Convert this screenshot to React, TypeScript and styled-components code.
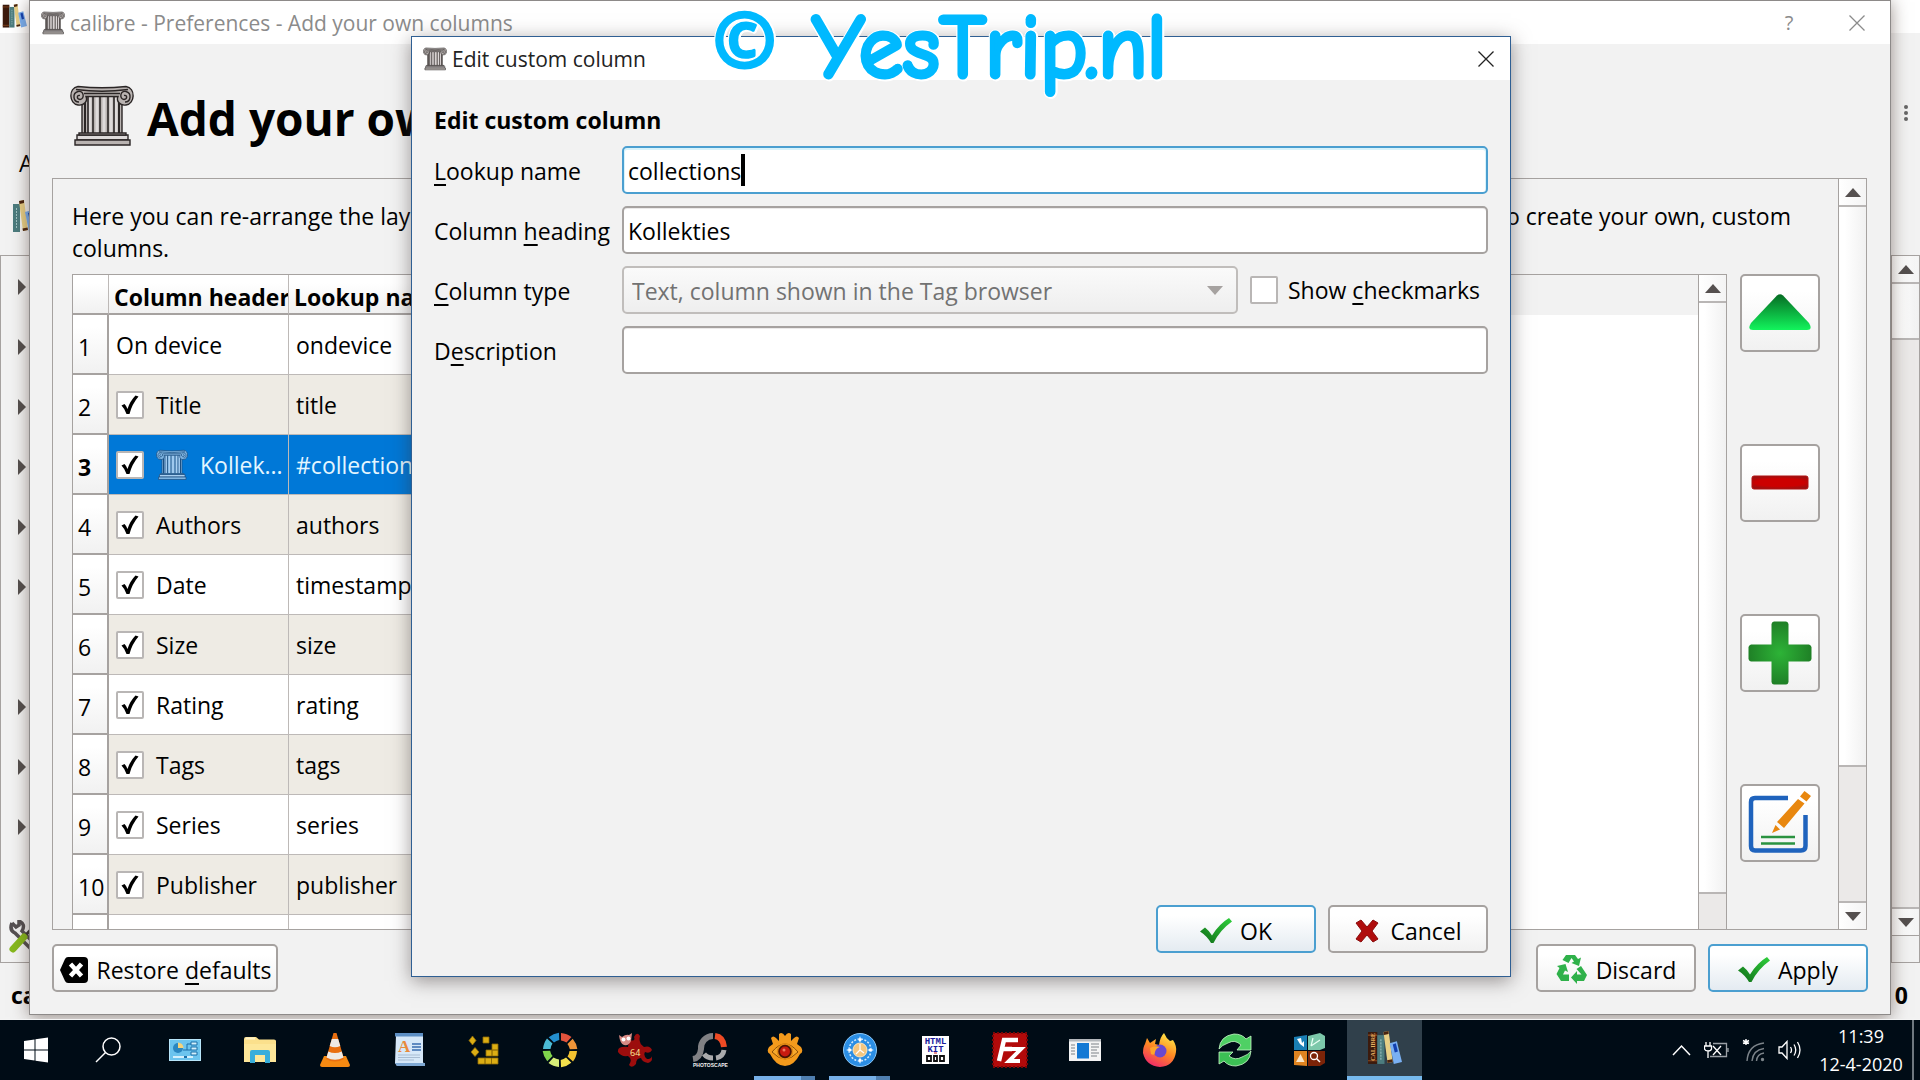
import React from "react";
import styled, { createGlobalStyle, css } from "styled-components";

const line = "#a6a2a0";
const panel = "#f2f2f2";

const Global = createGlobalStyle`
  *, *::before, *::after { box-sizing: border-box; }
  html, body { margin: 0; height: 100%; overflow: hidden; }
  body, button, input, select, table {
    font-family: "Open Sans", "Noto Sans", sans-serif;
    font-size: 23px;
    line-height: 32px;
    color: #000;
  }
  u { text-underline-offset: 4px; text-decoration-thickness: 2px; text-decoration-skip-ink: none; }
`;

/* ---------- Desktop and windows ---------- */

const Screen = styled.div`
  display: flex;
  flex-direction: column;
  height: 100vh;
  overflow: hidden;
`;

const Desktop = styled.div`
  position: relative;
  flex: 1;
  min-height: 0;
  overflow: hidden;
`;

const LibraryWindow = styled.div`
  display: flex;
  flex-direction: column;
  height: 100%;
  background: ${panel};
`;

const LibraryTitle = styled.div`
  height: 33px;
  padding: 4px 2px;
  background: #fff;
`;

const LibraryBar = styled.div<{ $height: number; $align?: string; $start?: number }>`
  display: flex;
  justify-content: space-between;
  align-items: ${(p) => p.$align ?? "flex-end"};
  height: ${(p) => p.$height}px;
  padding: 0 8px 0 ${(p) => p.$start ?? 19}px;
`;

const LibraryBody = styled.div`
  display: flex;
  justify-content: space-between;
  flex: 1;
  min-height: 0;
  border: 1px solid ${line};
`;

const Tree = styled.div`
  display: flex;
  flex-direction: column;
  padding: 1px 0 0 6px;
`;

const TreeNode = styled.div`
  display: flex;
  align-items: center;
  justify-content: center;
  width: 30px;
  height: 60px;
`;

const TreeTools = styled.div`
  display: flex;
  align-items: center;
  height: 50px;
  margin-top: auto;
`;

const LibraryStatus = styled.div`
  display: flex;
  justify-content: space-between;
  align-items: center;
  height: 56px;
  padding: 8px 12px 0 11px;
  font-weight: 700;
`;

const PreferencesWindow = styled.section`
  position: absolute;
  inset: 0 29px 4px 29px;
  display: flex;
  flex-direction: column;
  background: ${panel};
  border: 1px solid #8d8a89;
  box-shadow: 0 2px 16px rgba(60, 40, 30, 0.5);
`;

const DialogWindow = styled.section`
  position: absolute;
  inset: 36px 409px 42px 411px;
  display: flex;
  flex-direction: column;
  background: ${panel};
  border: 1px solid #2f5f93;
  box-shadow: 0 4px 18px rgba(60, 50, 50, 0.5);
`;

const TitleBar = styled.header<{ $inactive?: boolean }>`
  display: flex;
  align-items: center;
  gap: 5px;
  height: 43px;
  padding: 0 ${(p) => (p.$inactive ? 17 : 8)}px 0 11px;
  background: #fff;
  color: ${(p) => (p.$inactive ? "#8b8b8b" : "#222")};
  font-size: 21px;
`;

const TitleText = styled.span`
  flex: 1;
  white-space: nowrap;
`;

const WindowButton = styled.button`
  display: grid;
  place-items: center;
  width: 32px;
  height: 32px;
  padding: 0;
  border: 0;
  background: none;
  color: inherit;
  font-size: 20px;
`;

const WindowButtons = styled.div`
  display: flex;
  gap: 36px;
`;

const PageHeader = styled.div`
  display: flex;
  align-items: center;
  gap: 13px;
  height: 134px;
  padding: 10px 40px 0;
`;

const PageTitle = styled.h1`
  margin: 4px 0 0;
  font-size: 46px;
  line-height: 64px;
  white-space: nowrap;
`;

const Frame = styled.div`
  display: flex;
  flex: 1;
  min-height: 0;
  margin: 0 23px 0 22px;
  border: 1px solid ${line};
  overflow: hidden;
`;

const FrameContent = styled.div`
  display: flex;
  flex-direction: column;
  flex: 1;
  min-width: 0;
  padding: 21px 18px 0 19px;
`;

const Intro = styled.p`
  margin: 0 29px 10px 0;
`;

const IntroLine = styled.span`
  display: flex;
  justify-content: space-between;
  white-space: nowrap;
`;

const Columns = styled.div`
  display: flex;
  gap: 13px;
  flex: 1;
  min-height: 0;
`;

const TableBox = styled.div`
  display: flex;
  flex: 1;
  min-width: 0;
  border: 1px solid ${line};
  border-bottom: 0;
  background: #fff;
  overflow: hidden;
`;

const TableScroll = styled.div`
  flex: 1;
  overflow: hidden;
`;

const SideButtons = styled.div`
  display: flex;
  flex-direction: column;
  gap: 92px;
`;

const Footer = styled.footer`
  display: flex;
  gap: 12px;
  padding: 14px 22px 22px;
`;

const Spacer = styled.div`
  flex: 1;
`;

/* ---------- Column table ---------- */

const Table = styled.table`
  width: 100%;
  border-collapse: separate;
  border-spacing: 0;
  table-layout: fixed;
`;

const headFill = css`
  background: linear-gradient(#fff 20%, #f1f1f1);
`;

const HeadCell = styled.th`
  height: 40px;
  padding: 6px 0 0 5px;
  ${headFill}
  border-right: 1px solid #bdb9b7;
  border-bottom: 2px solid ${line};
  font-weight: 700;
  text-align: left;
  white-space: nowrap;
  overflow: hidden;
`;

const HeadFiller = styled.td`
  background: ${panel};
`;

const RowHead = styled.th<{ $current?: boolean }>`
  height: 60px;
  padding: 6px 0 0 5px;
  ${headFill}
  border-right: 2px solid ${line};
  border-bottom: 2px solid ${line};
  font-weight: ${(p) => (p.$current ? 700 : 400)};
  text-align: left;
`;

const Cell = styled.td<{ $tone: "plain" | "alt" | "selected" }>`
  height: 60px;
  padding: 0 0 0 7px;
  border-right: 1px solid #bdb9b7;
  border-bottom: 1px solid #bdb9b7;
  background: ${(p) => ({ plain: "#fff", alt: "#eeebe4", selected: "#0078d7" })[p.$tone]};
  color: ${(p) => (p.$tone === "selected" ? "#e4f6ff" : "#000")};
  white-space: nowrap;
  overflow: hidden;
`;

const CellContent = styled.label`
  display: flex;
  align-items: center;
  gap: 12px;
`;

/* ---------- Controls ---------- */

const PushButton = styled.button<{ $primary?: boolean; $wide?: boolean }>`
  display: flex;
  align-items: center;
  justify-content: center;
  gap: 8px;
  min-width: ${(p) => (p.$wide ? 226 : 160)}px;
  height: 48px;
  padding: 3px 4px 0;
  border: 2px solid ${(p) => (p.$primary ? "#4b9fd0" : line)};
  border-radius: 5px;
  background: ${(p) => (p.$primary ? "linear-gradient(#fff 20%, #e4ebf1)" : "linear-gradient(#fff 20%, #f1f1f1)")};
  white-space: nowrap;
`;

const ToolButton = styled.button`
  display: grid;
  place-items: center;
  width: 80px;
  height: 78px;
  padding: 0;
  border: 2px solid ${line};
  border-radius: 5px;
  background: linear-gradient(#fff 20%, #f1f1f1);
`;

const TickSlot = styled.span`
  display: inline-grid;
  flex: none;
  place-items: center;
  width: 28px;
  height: 28px;
  & > * { grid-area: 1 / 1; }
  & > svg { pointer-events: none; }
`;

const TickInput = styled.input`
  appearance: none;
  width: 28px;
  height: 28px;
  margin: 0;
  border: 2px solid #b9b6b5;
  border-radius: 2px;
  background: #fff;
`;

const DialogBody = styled.div`
  display: flex;
  flex-direction: column;
  flex: 1;
  padding: 24px 22px 23px;
`;

const DialogHeading = styled.h2`
  margin: 0 0 10px;
  font-size: 23px;
  line-height: 32px;
`;

const Form = styled.div`
  display: grid;
  grid-template-columns: 188px 1fr;
  row-gap: 12px;
`;

const FieldLabel = styled.label`
  padding-top: 9px;
  white-space: nowrap;
`;

const FieldBox = styled.div<{ $focus?: boolean }>`
  display: flex;
  align-items: center;
  height: 48px;
  padding: 0 4px;
  border: 2px solid ${(p) => (p.$focus ? "#4b9fd0" : line)};
  border-radius: 5px;
  background: #fff;
  box-shadow: ${(p) => (p.$focus ? "inset 0 1px 0 1px #d9f3fb" : "inset 0 1px 0 #eceaea")};
`;

const Field = styled.input<{ $fit?: boolean }>`
  ${(p) => (p.$fit ? "field-sizing: content;" : "width: 100%;")}
  height: 40px;
  padding: 2px 0 0;
  border: 0;
  outline: 0;
  background: transparent;
`;

const Caret = styled.span`
  width: 4px;
  height: 32px;
  background: #000;
`;

const TypeRow = styled.div`
  display: flex;
  align-items: center;
  gap: 12px;
`;

const SelectBox = styled.div`
  display: grid;
  flex: 1;
  align-items: center;
  & > * { grid-area: 1 / 1; }
  & > svg { justify-self: end; margin-right: 15px; pointer-events: none; }
`;

const Select = styled.select`
  appearance: none;
  width: 100%;
  height: 48px;
  padding: 2px 8px 0;
  border: 2px solid #c0bdbb;
  border-radius: 5px;
  background: linear-gradient(#fafafa, #eeeeee);
  color: #727272;
  opacity: 1;
`;

const CheckLabel = styled.label`
  display: flex;
  align-items: center;
  gap: 10px;
  width: 238px;
  white-space: nowrap;
`;

const DialogActions = styled.div`
  display: flex;
  justify-content: flex-end;
  gap: 12px;
  margin-top: auto;
`;

/* ---------- Scroll bars ---------- */

const Bar = styled.div`
  display: flex;
  flex-direction: column;
  flex: none;
  width: 28px;
  border-left: 1px solid ${line};
  background: #ebe9e8;
`;

const BarArrow = styled.div<{ $down?: boolean }>`
  display: grid;
  place-items: center;
  height: 28px;
  background: linear-gradient(90deg, #fff, #f4f4f4);
  border: 0 solid #b9b6b5;
  border-width: ${(p) => (p.$down ? "2px 0 0" : "0 0 2px")};
`;

const Thumb = styled.div<{ $grow: number }>`
  flex: ${(p) => p.$grow};
  background: linear-gradient(90deg, #fff 20%, #f1f1f1);
  border-bottom: 2px solid #b9b6b5;
`;

const Track = styled.div<{ $grow: number }>`
  flex: ${(p) => p.$grow};
`;

const BarCorner = styled.div`
  height: 27px;
  border-top: 1px solid ${line};
  background: ${panel};
`;

const Triangle = ({ dir, color = "#55504f" }: { dir: "up" | "down" | "right"; color?: string }) => {
  const d = { up: "M0 9 8 0 16 9z", down: "M0 0H16L8 9z", right: "M0 0 8 8 0 16z" }[dir];
  const [w, h] = dir === "right" ? [8, 16] : [16, 9];
  return (
    <svg width={w} height={h} viewBox={`0 0 ${w} ${h}`}>
      <path d={d} fill={color} />
    </svg>
  );
};

type BarProps = { thumb: number; track: number; down?: boolean; corner?: boolean };
const ScrollBar = ({ thumb, track, down, corner }: BarProps) => (
  <Bar>
    <BarArrow><Triangle dir="up" /></BarArrow>
    <Thumb $grow={thumb} />
    <Track $grow={track} />
    {down && <BarArrow $down><Triangle dir="down" /></BarArrow>}
    {corner && <BarCorner />}
  </Bar>
);

/* ---------- Icons ---------- */

const ColumnIcon = ({ w, tint }: { w: number; tint?: boolean }) => {
  const ink = tint ? "#1d4f80" : "#2b2626";
  const stone = tint ? "#7fb4e0" : "#b9b3b1";
  const light = tint ? "#a9d0f2" : "#dedada";
  return (
    <svg width={w} height={w} viewBox="0 0 64 64" fill="none" stroke={ink} strokeWidth="1.4">
      <path d="M12 12H52V50H12z" fill={stone} />
      <path d="M15 14V50M49 14V50" strokeWidth="2" />
      <path d="M20 13V49M27 13V49M34 13V49M41 13V49M46 14V49" stroke={light} strokeWidth="3" />
      <path d="M18 13V49M23 13V49M30 13V49M38 13V49M44 13V49" strokeWidth="1.6" />
      <path d="M8 2.500Q32 5 56 2.500C66 4 65 20 56 21C50 22 46 17 48 12.500H16C18 17 14 22 8 21C-1 20-2 4 8 2.500z" fill={stone} />
      <path d="M6 5.500Q32 9 58 5.500M14 9.500H50" />
      <path d="M9 18C3 18 2 9 8 7.500C14 6.500 15 15 10 15.500C6 15 7 10.500 10 11.500M55 18C61 18 62 9 56 7.500C50 6.500 49 15 54 15.500C58 15 57 10.500 54 11.500" />
      <path d="M7 51H58V56H7z" fill={light} />
      <path d="M5 56H60V61H5z" fill={stone} />
      <path d="M9 49H56V51H9z" fill={stone} />
    </svg>
  );
};

const Cross = () => (
  <svg width="16" height="16" viewBox="0 0 16 16" stroke="currentColor" strokeWidth="1.3">
    <path d="M.5.5 15.500 15.500M15.500.5.5 15.500" />
  </svg>
);

const GreenTick = () => (
  <svg width="32" height="26" viewBox="0 0 32 26">
    <defs>
      <linearGradient id="tick" x1="0" y1="1" x2="1" y2="0">
        <stop offset="0.200" stopColor="#16801f" />
        <stop offset="1" stopColor="#2fd03c" />
      </linearGradient>
    </defs>
    <path d="M0 13.500 5 9.500Q9 12.500 12 17.500Q19 6 29 0L32 3.500Q20 12 13.500 25H11Q7 18 0 13.500z" fill="url(#tick)" />
  </svg>
);

const RedCross = () => (
  <svg width="28" height="24" viewBox="-1 0 28 24">
    <path d="M1 4 6 1 12 8 18 1 23 4 17 12 23 20 18 23 12 16 6 23 1 20 7 12z" fill="#b00d0d" stroke="#8a0c0c" strokeLinejoin="round" />
  </svg>
);

const Recycle = () => (
  <svg width="32" height="32" viewBox="0 0 32 32" fill="#2fb14a">
    <path d="M10 1H19L22 5 25 3.500 23 12 15.500 9 18 7.500 15.500 4 12.500 9 6.500 6z" />
    <path d="M25 12 31 21 28 27H21V30L15 23.500 21 17V20.500H25.500L20.500 15z" />
    <path d="M1 12 9.500 10 12 18 9 16.500 7 20.500H13V27H5L.5 20 3.500 14z" />
  </svg>
);

const ClearIcon = () => (
  <svg width="30" height="28" viewBox="0 0 30 28">
    <path d="M9 1H25Q29 1 29 5V23Q29 27 25 27H9Q7 27 6 25L1 14 6 3Q7 1 9 1z" fill="#000" />
    <path d="M11.500 8 22.500 20M22.500 8 11.500 20" stroke="#fff" strokeWidth="4.500" />
  </svg>
);

const BlackTick = () => (
  <svg width="20" height="20" viewBox="0 0 20 20">
    <path d="M1.500 10.500 4.500 9Q6.500 11 7.500 14Q10 6 15.500.5L18.500 1.500Q12 9 9.500 19H6.500Q5 14 1.500 10.500z" fill="#000" />
  </svg>
);

const Tick = (props: React.InputHTMLAttributes<HTMLInputElement>) => (
  <TickSlot>
    <TickInput type="checkbox" {...props} />
    {props.defaultChecked && <BlackTick />}
  </TickSlot>
);

const MoveUp = () => (
  <svg width="64" height="64" viewBox="0 0 64 64">
    <defs>
      <linearGradient id="up" x1="0" y1="0" x2="0" y2="1">
        <stop stopColor="#066b23" />
        <stop offset="1" stopColor="#12f45c" />
      </linearGradient>
    </defs>
    <path d="M29 14.500Q32 12 35 14.500L61 42Q65 49 59 49H5Q-1 49 3 42z" fill="url(#up)" />
  </svg>
);

const Minus = () => (
  <svg width="64" height="64" viewBox="0 0 64 64">
    <defs>
      <radialGradient id="minus" gradientTransform="translate(-.2 0) scale(1.4 1)">
        <stop offset="0.600" stopColor="#cc0000" />
        <stop offset="1" stopColor="#9c1010" />
      </radialGradient>
    </defs>
    <rect x="4" y="25" width="56" height="13" rx="2" fill="url(#minus)" stroke="#b01010" />
  </svg>
);

const Plus = () => (
  <svg width="64" height="64" viewBox="0 0 64 64">
    <defs>
      <radialGradient id="plus">
        <stop stopColor="#2db337" />
        <stop offset="1" stopColor="#1f8026" />
      </radialGradient>
    </defs>
    <path d="M26 .5H38Q40 .5 40.500 3V23.500H61Q63 24 63.500 26V38Q63 40 61 40.500H40.500V61Q40 63.500 38 63.500H26Q24 63.500 23.500 61V40.500H3Q1 40 .5 38V26Q1 24 3 23.500H23.500V3Q24 .5 26 .5z" fill="url(#plus)" />
  </svg>
);

const EditIcon = () => (
  <svg width="64" height="64" viewBox="0 0 64 64" fill="none">
    <path d="M40 7H7Q3 7 3 11V55Q3 59.500 7 59.500H53Q57.500 59.500 57.500 55V24" stroke="#1f63bd" strokeWidth="4.500" />
    <path d="M13 46H47M13 52.500H47" stroke="#2a9240" strokeWidth="2.500" />
    <path d="M50 8 56.500 12.500 36 37 29 31z M52 5.500 56.500 0 63 5 58.500 10.500z M27.500 34 32 38.500 24 42z" fill="#e8870f" />
  </svg>
);

const Books = ({ w, text, part }: { w: number; text?: boolean; part?: boolean }) => (
  <svg width={w} height={w} viewBox="0 0 34 34">
    {!part && <rect x="1" y="1" width="9" height="31" fill="#3c1a0c" />}
    {!part && <path d="M1 4H10M1 29H10" stroke="#8c4a20" />}
    <rect x="10" y="4" width="7" height="28" fill="#4c7c7e" />
    <path d="M13.500 8V28" stroke="#9fc2c2" strokeDasharray="2 1" />
    <path d="M16 1 21 0 25 30 20 31z" fill="#e8cf86" />
    <path d="M16 1 21 0V3L16.500 4zM19.500 28.500 24.500 27.500 25 30 20 31z" fill="#4a2410" />
    <path d="M22 12 29 10 34 30 26 32z" fill="#7ab0f2" />
    <path d="M25 13 28 12 30 20 27 21z" fill="#1240b0" />
    {text && (
      <text transform="translate(8 29) rotate(-90)" fontSize="6" fontWeight="700" fill="#e8b060" fontFamily="Liberation Serif">CALIBRE</text>
    )}
  </svg>
);

const Tools = () => (
  <svg width="34" height="34" viewBox="0 0 34 34" fill="none">
    <path d="M5 3Q2 10 8 13L26 31M5 3 9 7 12 5V1Q19 4 15 11L31 27" stroke="#555052" strokeWidth="3.500" />
    <path d="M30 3 17 17" stroke="#3a3638" strokeWidth="3" />
    <path d="M17 17 6 29" stroke="#86b81c" strokeWidth="7" strokeLinecap="round" />
  </svg>
);

/* ---------- Taskbar ---------- */

const TaskBar = styled.nav`
  display: flex;
  height: 61px;
  border-top: 1px solid #f4f4f4;
  background: #000c16;
  color: #fff;
`;

const Task = styled.button<{ $state?: "running" | "active"; $system?: boolean }>`
  position: relative;
  display: grid;
  flex: none;
  place-items: center;
  width: ${(p) => (p.$system ? 72 : 75)}px;
  padding: 0;
  border: 0;
  border-bottom: ${(p) => (p.$state === "active" ? "4px solid #76b9ed" : "0")};
  background: ${(p) => (p.$state === "active" ? "#30404b" : "none")};
  ${(p) =>
    p.$state === "running" &&
    css`
      &::after {
        content: "";
        position: absolute;
        inset: auto 7px 0;
        height: 4px;
        background: linear-gradient(90deg, #76b0e8 77%, #4f7fb0 77%);
      }
    `}
`;

const TaskList = styled.div`
  display: flex;
  flex: 1;
  margin-left: 3px;
`;

const Tray = styled.div`
  display: flex;
  align-items: center;
  gap: 13px;
`;

const Clock = styled.time`
  width: 92px;
  font-size: 18px;
  line-height: 28px;
  text-align: center;
`;

const ShowDesktop = styled.button`
  width: 8px;
  height: 100%;
  margin-left: -8px;
  padding: 0;
  border: 0;
  border-left: 2px solid #6e7880;
  background: none;
`;

const Glyph = ({ children, size = 36 }: { children: React.ReactNode; size?: number }) => (
  <svg width={size} height={size} viewBox="0 0 36 36" fill="none">{children}</svg>
);

const ringColours = ["#e2533c", "#ee9438", "#f2c230", "#f3e04c", "#d7ee78", "#7fd44c", "#4cbcd6", "#2490cf"];
const RingGlyph = () => (
  <Glyph>
    {ringColours.map((c, i) => (
      <path key={c} transform={`rotate(${i * 45} 18 18)`} d="M19 1Q25 1.500 29.500 5L24.500 10.500Q22 8.800 19 8.500z" fill={c} />
    ))}
  </Glyph>
);

const tasks: { name: string; state?: "running" | "active"; icon: React.ReactNode }[] = [
  {
    name: "Control panel",
    icon: (
      <Glyph>
        <rect x="2.500" y="7.500" width="31" height="21" fill="#6cc4ee" stroke="#b8e6fa" />
        <circle cx="11" cy="16" r="5" fill="#2a86c0" /><path d="M11 16V10.500A5.500 5.500 0 0 1 16.500 16z" fill="#f3d27a" />
        <path d="M16 18H20V12H24M20 18H24" stroke="#1b6fa8" />
        <path d="M24 10H30V13H24zM24 15H30V18H24zM24 20H30V23H24z" fill="#d4f0fc" stroke="#1b6fa8" />
        <path d="M6 25H26" stroke="#d4f0fc" strokeWidth="2" /><path d="M17 25H20" stroke="#1b6fa8" strokeWidth="2" />
      </Glyph>
    ),
  },
  {
    name: "File Explorer",
    icon: (
      <Glyph>
        <path d="M2 30V7Q2 5 4 5H14L17 7.500H32Q34 7.500 34 9V30z" fill="#fbe08c" />
        <path d="M3.500 6.500H13" stroke="#fff3c8" strokeWidth="2" />
        <path d="M2 30V12H34V30z" fill="#fde79a" />
        <path d="M8 31V20Q8 18 10 18H26Q28 18 28 20V31H23V23H13V31z" fill="#38aedb" />
      </Glyph>
    ),
  },
  {
    name: "VLC media player",
    icon: (
      <Glyph>
        <path d="M7 24H29L33 33Q33 35 31 35H5Q3 35 3 33z" fill="#f58a12" />
        <path d="M16.500 1H19.500L27 27Q18 32 9 27z" fill="#e96f10" />
        <path d="M14.800 7H21.200L23.300 14Q18 16.500 12.700 14zM11.300 19.500Q18 22.500 24.700 19.500L26.500 25.500Q18 30 9.500 25.500z" fill="#eeeae6" />
      </Glyph>
    ),
  },
  {
    name: "WordPad",
    icon: (
      <Glyph>
        <path d="M4 3H31V30L33 34H5L3 31z" fill="#d6e8f8" /><path d="M3 1H31V4.500H3z" fill="#5d8fc4" />
        <path d="M3 31H33V34H5z" fill="#7fa9d4" />
        <text x="6" y="20" fontSize="17" fontWeight="700" fill="#e88a3c" fontFamily="Liberation Serif">A</text>
        <path d="M20 12H29M20 15H29M20 18H29" stroke="#3a6cae" strokeWidth="1.500" />
        <path d="M6 23H28M6 25.500H28M6 28H22" stroke="#a8bcd2" />
      </Glyph>
    ),
  },
  {
    name: "Blocks",
    icon: (
      <Glyph>
        <g fill="#dcae14" stroke="#8f6c06" strokeWidth=".8">
          <path d="M5.500 4 9 8.500 5.500 13 2 8.500zM8 15.500 12 20 8 24.500 4 20zM16 5H22V11H16z" />
          <path d="M25 12H31V18H25zM19 18H25V24H19zM25 18H31V24H25zM11 26H18V32H11zM18 26H24.500V32H18zM24.500 26H31V32H24.500z" />
        </g>
      </Glyph>
    ),
  },
  { name: "Ring", icon: <RingGlyph /> },
  {
    name: "IrfanView 64",
    icon: (
      <Glyph>
        <path d="M12 8Q19 10 17 5Q20-1 23 4Q21 11 27 15Q33 13 35 18Q33 22 28 20Q26 24 30 27Q35 27 34 24Q37 29 31 31Q25 30 24 26Q19 26 19 32Q15 37 12 33Q16 27 11 24Q4 25 1 20Q0 14 11 15z" fill="#9c0d0d" />
        <path d="M2 3 5 5Q9 2 12 3L15 1 14 9Q12 14 7 13Q3 12 2 3z" fill="#d88a84" /><circle cx="6.500" cy="7.500" r="2" fill="#fff" /><circle cx="11.500" cy="6.500" r="2" fill="#fff" />
        <text x="13" y="24" fontSize="9" fill="#fff09a" fontFamily="Open Sans">64</text>
      </Glyph>
    ),
  },
  {
    name: "PhotoScape",
    icon: (
      <Glyph>
        <path d="M21 4A12 12 0 0 0 9 17Q8 26 1 27" stroke="#808184" strokeWidth="6" />
        <path d="M12 22Q15 26 21 26M24 26Q31 25 32 18" stroke="#a9aaac" strokeWidth="5" />
        <path d="M23 4Q31 5 32 15" stroke="#ee4a24" strokeWidth="6" />
        <text x="1" y="35" fontSize="5" fontWeight="700" fill="#f2f2f2" fontFamily="Liberation Sans">PHOTOSCAPE</text>
      </Glyph>
    ),
  },
  {
    name: "XnView",
    state: "running",
    icon: (
      <Glyph>
        <path d="M2 15Q-1 20 3 22Q9 34 18 34Q27 34 33 22Q37 20 34 15L30 12 32 6Q30 3 27 6L24 9 24 2Q21-1 18 4Q15-1 12 2L12 9 9 6Q6 3 4 6L6 12z" fill="#f39a1c" />
        <path d="M5 20Q18 4 31 20Q18 34 5 20z" fill="#f7a92c" stroke="#8d5008" strokeWidth="1" />
        <circle cx="18" cy="19.500" r="7.500" fill="#4a1206" stroke="#e28a14" strokeWidth="1.500" /><circle cx="18" cy="19.500" r="5" fill="#c81a10" /><circle cx="17" cy="18" r="1.500" fill="#f07a60" />
      </Glyph>
    ),
  },
  {
    name: "Compass",
    state: "running",
    icon: (
      <Glyph>
        <circle cx="18" cy="18" r="16.500" fill="#2b8ee4" stroke="#8cc8f6" /><circle cx="18" cy="18" r="11" stroke="#d8ecfc" strokeWidth="1.500" strokeDasharray="2 1.500" />
        <path d="M18 4 19.500 8.500 18 10 16.500 8.500zM18 32 19.500 27.500 18 26 16.500 27.500zM4 18 8.500 16.500 10 18 8.500 19.500zM32 18 27.500 16.500 26 18 27.500 19.500z" fill="#fff" />
        <circle cx="18" cy="18" r="7" fill="#f5c67e" stroke="#fbe6c0" /><path d="M18 12V18L14 22M18 18 22 21" stroke="#fff" strokeWidth="1.200" />
      </Glyph>
    ),
  },
  {
    name: "HTML-Kit",
    icon: (
      <Glyph>
        <rect x="5" y="4" width="27" height="28" fill="#fff" />
        <g fontFamily="Liberation Mono" fontWeight="700" textAnchor="middle">
          <text x="18.500" y="12" fontSize="9" fill="#1a1a9c">HTML</text>
          <text x="18.500" y="19.500" fontSize="9" fill="#1a1a9c">KIT</text>
        </g>
        <path d="M10 24H14V29H10zM17 24H20V29H17zM23 24H27V29H23z" stroke="#111" strokeWidth="1.800" /><path d="M17 21H20" stroke="#c22" />
      </Glyph>
    ),
  },
  {
    name: "FileZilla",
    icon: (
      <Glyph>
        <rect x="1" y="1" width="34" height="34" fill="#b20a0a" stroke="#7a0606" strokeWidth="2" strokeDasharray="2 2" />
        <path d="M7 29 12 8H26M10 17H20" stroke="#fff" strokeWidth="4.500" />
        <path d="M17 17H29L17 29H28" stroke="#fff" strokeWidth="4" />
      </Glyph>
    ),
  },
  {
    name: "Reader",
    icon: (
      <Glyph>
        <rect x="2" y="7" width="32" height="22" fill="#f4f4f4" /><path d="M2 7H34V9.500H2z" fill="#b4b8bc" />
        <rect x="10" y="11" width="12" height="15.500" fill="#1479d4" />
        <path d="M4 13H8M4 16H8M4 19H8M4 22H8M24 12H32M24 15H32M24 18H30M24 21H32M24 24H30" stroke="#7c8288" />
      </Glyph>
    ),
  },
  {
    name: "Firefox",
    icon: (
      <Glyph>
        <defs>
          <linearGradient id="fox" x1=".8" y1="0" x2=".3" y2="1"><stop stopColor="#fff04a" /><stop offset=".5" stopColor="#ff8a22" /><stop offset="1" stopColor="#f0286a" /></linearGradient>
        </defs>
        <path d="M3 12 5 6 8 11 14 7 13 12 17 13Q18 5 22 1Q24 6 28 9L31 8Q35 14 34 20Q32 34 18 35Q4 34 1 21Q1 15 3 12z" fill="url(#fox)" />
        <circle cx="18" cy="19" r="6.500" fill="#6a48d0" /><path d="M8 16Q13 13 18 15Q14 16 13 20Q13 24 9 22z" fill="#ffa52a" />
      </Glyph>
    ),
  },
  {
    name: "Sync",
    icon: (
      <Glyph>
        <path d="M2 17Q3 4 17 2Q25 2 29 7L34 4V18H20L24 13Q18 7 11 11Q5 13 2 17z" fill="#4fd064" stroke="#c8f8c8" strokeWidth=".8" />
        <path d="M34 19Q33 32 19 34Q11 34 7 29L2 32V20H16L12 24Q18 29 25 25Q31 23 34 19z" fill="#3cc055" stroke="#c8f8c8" strokeWidth=".8" />
      </Glyph>
    ),
  },
  {
    name: "Cubes",
    icon: (
      <Glyph>
        <path d="M2 5 15 3V18H2z" fill="#1a7fb4" /><path d="M16 4 28 1 33 4V16L28 18H16z" fill="#7cc8aa" />
        <path d="M2 19H15V34L2 33z" fill="#e08420" /><path d="M16 19H33V31L28 34H16z" fill="#7c2408" />
        <path d="M5 7 9 6 10 11 12 9V15L8 12z" fill="#fff" /><path d="M19 14 21 6M19 14 28 8" stroke="#e8fff4" strokeWidth="1.200" />
        <path d="M8.500 22 12.500 30H4z" fill="#fbe6c8" /><circle cx="22" cy="24" r="3.500" stroke="#fff" strokeWidth="1.300" /><path d="M24.500 26.500 28 30" stroke="#fff" strokeWidth="1.500" />
      </Glyph>
    ),
  },
  { name: "calibre", state: "active", icon: <Books w={35} text /> },
];

/* ---------- Watermark ---------- */

const Watermark = styled.svg`
  position: absolute;
  top: 0;
  left: 50%;
  width: 520px;
  height: 110px;
  margin-left: -256px;
  pointer-events: none;
  fill: #00b9ff;
  stroke: #00b9ff;
  stroke-linejoin: round;
  filter: drop-shadow(2px 1px 0 #fff) drop-shadow(-1px 1px 0 #fff) drop-shadow(0 -1px 0 #fff);
`;

const WatermarkSign = styled.text`
  font: 700 76px "Open Sans", sans-serif;
  stroke-width: 3px;
`;

const WatermarkName = styled.text`
  font: 88px "Comic Sans MS", "Comic Neue", "Open Sans", sans-serif;
  stroke-width: 5px;
`;

/* ---------- Data ---------- */

type ColumnRow = { header: string; lookup: string; fixed?: boolean; selected?: boolean };
const rows: ColumnRow[] = [
  { header: "On device", lookup: "ondevice", fixed: true },
  { header: "Title", lookup: "title" },
  { header: "Kollek...", lookup: "#collections", selected: true },
  { header: "Authors", lookup: "authors" },
  { header: "Date", lookup: "timestamp" },
  { header: "Size", lookup: "size" },
  { header: "Rating", lookup: "rating" },
  { header: "Tags", lookup: "tags" },
  { header: "Series", lookup: "series" },
  { header: "Publisher", lookup: "publisher" },
];

const treeNodes = [true, true, true, true, true, true, false, true, true, true];

const ColumnTable = () => (
  <Table>
    <colgroup>
      <col style={{ width: 36 }} />
      <col style={{ width: 180 }} />
      <col style={{ width: 180 }} />
      <col />
    </colgroup>
    <thead>
      <tr>
        <HeadCell as="td" />
        <HeadCell scope="col">Column header</HeadCell>
        <HeadCell scope="col">Lookup name</HeadCell>
        <HeadFiller />
      </tr>
    </thead>
    <tbody>
      {rows.map((row, i) => {
        const tone = row.selected ? "selected" : i % 2 ? "alt" : "plain";
        return (
          <tr key={row.lookup}>
            <RowHead scope="row" $current={row.selected}>{i + 1}</RowHead>
            <Cell $tone={tone}>
              {row.fixed ? (
                row.header
              ) : (
                <CellContent>
                  <Tick defaultChecked />
                  {row.selected && <ColumnIcon w={32} tint />}
                  {row.header}
                </CellContent>
              )}
            </Cell>
            <Cell $tone={tone}>{row.lookup}</Cell>
            <td />
          </tr>
        );
      })}
      <tr>
        <RowHead scope="row" />
        <Cell $tone="plain" />
        <Cell $tone="plain" />
        <td />
      </tr>
    </tbody>
  </Table>
);

export default function App() {
  return (
    <Screen>
      <Global />
      <Desktop>
        <LibraryWindow>
          <LibraryTitle><Books w={25} /></LibraryTitle>
          <LibraryBar $height={146}>
            <span>A</span>
            <svg width="12" height="86" viewBox="0 0 12 86" fill="#666">
              <circle cx="6" cy="14" r="2" /><circle cx="6" cy="20" r="2" /><circle cx="6" cy="26" r="2" />
            </svg>
          </LibraryBar>
          <LibraryBar $height={76} $align="center" $start={3}><Books w={34} part /></LibraryBar>
          <LibraryBody>
            <Tree>
              {treeNodes.map((open, i) => (
                <TreeNode key={i}>{open && <Triangle dir="right" />}</TreeNode>
              ))}
              <TreeTools><Tools /></TreeTools>
            </Tree>
            <ScrollBar thumb={54} track={570} down corner />
          </LibraryBody>
          <LibraryStatus><span>ca</span><span>0</span></LibraryStatus>
        </LibraryWindow>

        <PreferencesWindow aria-label="Preferences">
          <TitleBar $inactive>
            <ColumnIcon w={24} />
            <TitleText>calibre - Preferences - Add your own columns</TitleText>
            <WindowButtons>
              <WindowButton aria-label="Help">?</WindowButton>
              <WindowButton aria-label="Close preferences"><Cross /></WindowButton>
            </WindowButtons>
          </TitleBar>
          <PageHeader>
            <ColumnIcon w={64} />
            <PageTitle>Add your own columns</PageTitle>
          </PageHeader>
          <Frame>
            <FrameContent>
              <Intro>
                <IntroLine>
                  <span>Here you can re-arrange the layout of the columns in the calibre library book list.</span>
                  <span>You can also create your own, custom</span>
                </IntroLine>
                columns.
              </Intro>
              <Columns>
                <TableBox>
                  <TableScroll><ColumnTable /></TableScroll>
                  <ScrollBar thumb={590} track={35} />
                </TableBox>
                <SideButtons>
                  <ToolButton aria-label="Move column up"><MoveUp /></ToolButton>
                  <ToolButton aria-label="Remove column"><Minus /></ToolButton>
                  <ToolButton aria-label="Add column"><Plus /></ToolButton>
                  <ToolButton aria-label="Edit column"><EditIcon /></ToolButton>
                </SideButtons>
              </Columns>
            </FrameContent>
            <ScrollBar thumb={560} track={134} down />
          </Frame>
          <Footer>
            <PushButton $wide><ClearIcon /><span>Restore <u>d</u>efaults</span></PushButton>
            <Spacer />
            <PushButton><Recycle />Discard</PushButton>
            <PushButton $primary><GreenTick />Apply</PushButton>
          </Footer>
        </PreferencesWindow>

        <DialogWindow role="dialog" aria-label="Edit custom column">
          <TitleBar>
            <ColumnIcon w={24} />
            <TitleText>Edit custom column</TitleText>
            <WindowButton aria-label="Close dialog"><Cross /></WindowButton>
          </TitleBar>
          <DialogBody>
            <DialogHeading>Edit custom column</DialogHeading>
            <Form>
              <FieldLabel htmlFor="lookup"><u>L</u>ookup name</FieldLabel>
              <FieldBox $focus><Field $fit id="lookup" defaultValue="collections" /><Caret /></FieldBox>
              <FieldLabel htmlFor="heading">Column <u>h</u>eading</FieldLabel>
              <FieldBox><Field id="heading" defaultValue="Kollekties" /></FieldBox>
              <FieldLabel htmlFor="type"><u>C</u>olumn type</FieldLabel>
              <TypeRow>
                <SelectBox>
                  <Select id="type" disabled>
                    <option>Text, column shown in the Tag browser</option>
                  </Select>
                  <Triangle dir="down" color="#a6a2a0" />
                </SelectBox>
                <CheckLabel><Tick /><span>Show <u>c</u>heckmarks</span></CheckLabel>
              </TypeRow>
              <FieldLabel htmlFor="description">D<u>e</u>scription</FieldLabel>
              <FieldBox><Field id="description" /></FieldBox>
            </Form>
            <DialogActions>
              <PushButton $primary><GreenTick />OK</PushButton>
              <PushButton><RedCross />Cancel</PushButton>
            </DialogActions>
          </DialogBody>
        </DialogWindow>

        <Watermark viewBox="0 0 520 110">
          <WatermarkSign x="9" y="67">©</WatermarkSign>
          <WatermarkName x="108" y="77">YesTrip.nl</WatermarkName>
        </Watermark>
      </Desktop>

      <TaskBar aria-label="Taskbar">
        <Task $system aria-label="Start">
          <svg width="26" height="26" viewBox="0 0 26 26" fill="#fff">
            <path d="M1 4 11.500 2.500V12.500H1zM12.500 2.300 25 .5V12.500H12.500zM1 13.500H11.500V23.500L1 22zM12.500 13.500H25V25.500L12.500 23.700z" />
          </svg>
        </Task>
        <Task $system aria-label="Search">
          <svg width="26" height="26" viewBox="0 0 26 26" fill="none" stroke="#fff" strokeWidth="1.500">
            <circle cx="16.500" cy="9.500" r="8.500" /><path d="M10.500 15.500 1 25" />
          </svg>
        </Task>
        <TaskList>
          {tasks.map((t) => (
            <Task key={t.name} $state={t.state} aria-label={t.name}>{t.icon}</Task>
          ))}
        </TaskList>
        <Tray>
          <svg width="19" height="12" viewBox="0 0 19 12" fill="none" stroke="#fff" strokeWidth="1.500"><path d="M1 11 9.500 2 18 11" /></svg>
          <svg width="25" height="18" viewBox="0 0 25 18" fill="none" stroke="#fff" strokeWidth="1.300">
            <path d="M2 1V5M6 1V5M.5 5H7.500V8Q7 10 4 10Q1 10 .5 8zM4 10V17" /><path d="M9 5 17 14M17 5 9 14" />
            <path d="M9 2.500H22.500V15.500H6M24 7V11" stroke="#9aa0a6" />
          </svg>
          <svg width="23" height="24" viewBox="0 0 23 24" fill="none" stroke="#7c848a" strokeWidth="1.400">
            <path d="M4 1V7M1 2.500 7 5.500M7 2.500 1 5.500" stroke="#fff" />
            <path d="M5 23Q6 7 22 5M10 23Q11 12 22 10.500M14.500 23Q15 16 22 15" /><circle cx="20.500" cy="21.500" r="1" fill="#9aa0a6" />
          </svg>
          <svg width="24" height="20" viewBox="0 0 24 20" fill="none" stroke="#fff" strokeWidth="1.300">
            <path d="M1 7H4L9 1.500V18.500L4 13H1z" /><path d="M12.500 7Q14.500 10 12.500 13M16 4.500Q19.500 10 16 15.500M19.500 2Q24.500 10 19.500 18" />
          </svg>
          <Clock>11:39<br />12-4-2020</Clock>
          <ShowDesktop aria-label="Show desktop" />
        </Tray>
      </TaskBar>
    </Screen>
  );
}
